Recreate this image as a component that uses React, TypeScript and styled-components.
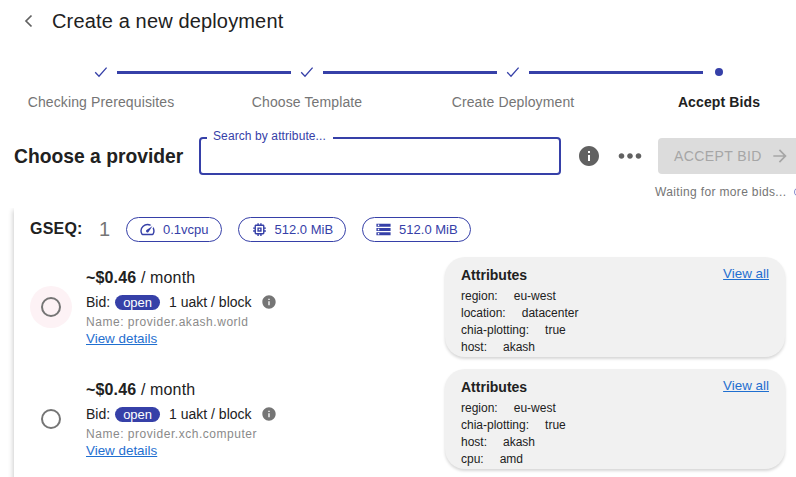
import React from "react";
import styled, { createGlobalStyle } from "styled-components";

const Global = createGlobalStyle`
  html, body { margin: 0; padding: 0; background: #fff; }
  body { font-family: "Liberation Sans", Arial, sans-serif; color: #212121; }
`;

const PRIMARY = "#3640a8";

const Page = styled.div`
  width: 796px;
  height: 477px;
  overflow: hidden;
  position: relative;
`;

const Header = styled.header`
  display: flex;
  align-items: center;
  height: 42px;
  padding-left: 24px;
`;

const BackButton = styled.span`
  display: flex;
  width: 28px;
  color: #616161;
`;

const Title = styled.h1`
  margin: 0;
  font-size: 20px;
  font-weight: 400;
  line-height: 42px;
  letter-spacing: 0.15px;
`;

const Stepper = styled.div`
  display: grid;
  grid-template-columns: repeat(4, 206px);
  margin: 20px 0 0 -2px;
`;

const Step = styled.div`
  display: flex;
  flex-direction: column;
  align-items: center;
  position: relative;
`;

const StepIconWrap = styled.div`
  height: 20px;
  display: flex;
  align-items: center;
  justify-content: center;
  color: ${PRIMARY};
`;

const Connector = styled.span`
  position: absolute;
  top: 9px;
  left: calc(50% + 16px);
  width: 174px;
  height: 3px;
  background: ${PRIMARY};
`;

const Dot = styled.span`
  width: 8px;
  height: 8px;
  border-radius: 50%;
  background: ${PRIMARY};
`;

const StepLabel = styled.div<{ $active?: boolean }>`
  margin-top: 10px;
  font-size: 14px;
  line-height: 20px;
  letter-spacing: 0.12px;
  white-space: nowrap;
  font-weight: ${(p) => (p.$active ? 700 : 400)};
  color: ${(p) => (p.$active ? "#212121" : "#757575")};
`;

const Toolbar = styled.div`
  display: flex;
  align-items: center;
  margin-top: 24px;
  padding-left: 14px;
  height: 40px;
`;

const Heading = styled.h2`
  margin: 0;
  padding-top: 2px;
  width: 185px;
  flex-shrink: 0;
  font-size: 19.3px;
  font-weight: 700;
  white-space: nowrap;
`;

const SearchBox = styled.div`
  position: relative;
  flex-shrink: 0;
  box-sizing: border-box;
  width: 362px;
  height: 38px;
  border: 2px solid ${PRIMARY};
  border-radius: 4px;
`;

const SearchLabel = styled.label`
  position: absolute;
  left: 6px;
  top: -10px;
  padding: 0 7px 0 6px;
  background: #fff;
  color: ${PRIMARY};
  font-size: 12px;
  line-height: 14px;
  letter-spacing: 0.1px;
  white-space: nowrap;
`;

const ToolIcon = styled.span`
  display: flex;
  flex-shrink: 0;
  color: #616161;
  margin-left: ${(p: { $ml: number }) => p.$ml}px;
`;

const AcceptButton = styled.button`
  flex-shrink: 0;
  display: flex;
  align-items: center;
  gap: 8px;
  box-sizing: border-box;
  width: 160px;
  height: 36px;
  margin-left: 11px;
  padding: 0 0 0 16px;
  border: 0;
  border-radius: 4px;
  background: #dcdcdc;
  color: #a6a6a6;
  font-family: inherit;
  font-size: 14px;
  letter-spacing: 0.4px;
  white-space: nowrap;
`;

const WaitingRow = styled.div`
  display: flex;
  align-items: center;
  gap: 8px;
  margin-top: 7px;
  padding-left: 655px;
  height: 18px;
  font-size: 12px;
  letter-spacing: 0.35px;
  color: #757575;
  white-space: nowrap;
`;

const Spinner = styled.span`
  flex-shrink: 0;
  width: 10px;
  height: 10px;
  box-sizing: border-box;
  border: 1.5px solid ${PRIMARY};
  border-radius: 50%;
  opacity: 0.6;
`;

const Panel = styled.section`
  margin: 7px 0 0 14px;
  width: 800px;
  height: 300px;
  background: #fff;
  box-shadow: -1px 2px 5px rgba(0, 0, 0, 0.2);
  clip-path: inset(0 0 0 -8px);
`;

const GroupHeader = styled.div`
  display: flex;
  align-items: center;
  height: 42px;
  padding: 0 0 0 16px;
`;

const GroupLabel = styled.span`
  width: 69px;
  font-size: 16px;
  font-weight: 700;
  letter-spacing: 0.2px;
`;

const GroupNumber = styled.span`
  width: 27px;
  font-size: 20px;
  color: #757575;
`;

const Chip = styled.span`
  display: inline-flex;
  align-items: center;
  gap: 7px;
  box-sizing: border-box;
  height: 25px;
  padding: 0 12px;
  margin-right: 16px;
  border: 1px solid ${PRIMARY};
  border-radius: 13px;
  color: ${PRIMARY};
  font-size: 13px;
  white-space: nowrap;
`;

const BidRow = styled.div`
  display: flex;
  height: 112px;
  padding-top: 7px;
  box-sizing: border-box;
`;

const RadioCell = styled.div`
  width: 72px;
  height: 100px;
  display: flex;
  align-items: center;
  justify-content: center;
  flex-shrink: 0;
`;

const Halo = styled.span<{ $focused?: boolean }>`
  width: 42px;
  height: 42px;
  margin-left: 2px;
  border-radius: 50%;
  background: ${(p) => (p.$focused ? "#fdf2f5" : "transparent")};
  display: flex;
  align-items: center;
  justify-content: center;
`;

const RadioRing = styled.span`
  box-sizing: border-box;
  width: 20px;
  height: 20px;
  border: 2px solid #757575;
  border-radius: 50%;
`;

const BidInfo = styled.div`
  width: 359px;
  flex-shrink: 0;
  padding-top: 11px;
`;

const Price = styled.div`
  font-size: 16px;
  line-height: 20px;
  letter-spacing: 0.15px;
  b {
    font-weight: 700;
  }
`;

const BidLine = styled.div`
  display: flex;
  align-items: center;
  height: 18px;
  margin-top: 5px;
  font-size: 14px;
`;

const Status = styled.span`
  display: inline-block;
  margin: 0 9px 0 5px;
  padding: 0 8px;
  height: 15px;
  line-height: 15px;
  border-radius: 8px;
  background: ${PRIMARY};
  color: #fff;
  font-size: 13px;
`;

const SmallInfo = styled.span`
  display: flex;
  margin-left: 9px;
  color: #757575;
`;

const ProviderName = styled.div`
  margin-top: 3px;
  font-size: 12px;
  line-height: 16px;
  letter-spacing: 0.53px;
  color: #8a8a8a;
`;

const Link = styled.a`
  color: #1f6fd0;
  text-decoration: underline;
  font-size: 13.4px;
`;

const DetailsLine = styled.div`
  line-height: 16px;
`;

const AttrCard = styled.div`
  position: relative;
  box-sizing: border-box;
  width: 340px;
  height: 100px;
  flex-shrink: 0;
  overflow: hidden;
  padding: 9px 16px 0;
  border-radius: 20px;
  background: #f1f1f1;
  box-shadow: 0 2px 3px rgba(0, 0, 0, 0.16);
`;

const AttrTitle = styled.div`
  font-size: 14px;
  font-weight: 700;
  line-height: 18px;
  margin-bottom: 4px;
`;

const ViewAll = styled.span`
  position: absolute;
  top: 8px;
  right: 16px;
  line-height: 16px;
`;

const AttrLine = styled.div`
  display: flex;
  gap: 16px;
  font-size: 12px;
  line-height: 17px;
  white-space: nowrap;
`;

const Icon = ({ d, size }: { d: string; size: number }) => (
  <svg width={size} height={size} viewBox="0 0 24 24" fill="currentColor" aria-hidden="true">
    <path d={d} />
  </svg>
);

const P = {
  info: "M12 2C6.48 2 2 6.48 2 12s4.48 10 10 10 10-4.48 10-10S17.52 2 12 2zm1 15h-2v-6h2v6zm0-8h-2V7h2v2z",
  more: "M6 10c-1.1 0-2 .9-2 2s.9 2 2 2 2-.9 2-2-.9-2-2-2zm12 0c-1.1 0-2 .9-2 2s.9 2 2 2 2-.9 2-2-.9-2-2-2zm-6 0c-1.1 0-2 .9-2 2s.9 2 2 2 2-.9 2-2-.9-2-2-2z",
  arrow: "M12 4l-1.41 1.41L16.17 11H4v2h12.17l-5.58 5.59L12 20l8-8z",
  speed: "M20.38 8.57l-1.23 1.85a8 8 0 0 1-.22 7.58H5.07A8 8 0 0 1 15.58 6.85l1.85-1.23A10 10 0 0 0 3.35 19a2 2 0 0 0 1.72 1h13.85a2 2 0 0 0 1.74-1 10 10 0 0 0-.27-10.44zm-9.79 6.84a2 2 0 0 0 2.83 0l5.66-8.49-8.49 5.66a2 2 0 0 0 0 2.83z",
  memory: "M15 9H9v6h6V9zm-2 4h-2v-2h2v2zm8-2V9h-2V7c0-1.1-.9-2-2-2h-2V3h-2v2h-2V3H9v2H7c-1.1 0-2 .9-2 2v2H3v2h2v2H3v2h2v2c0 1.1.9 2 2 2h2v2h2v-2h2v2h2v-2h2c1.1 0 2-.9 2-2v-2h2v-2h-2v-2h2zm-4 6H7V7h10v10z",
  storage: "M2 20h20v-4H2v4zm2-3h2v2H4v-2zM2 4v4h20V4H2zm4 3H4V5h2v2zm-4 7h20v-4H2v4zm2-3h2v2H4v-2z",
};

const Check = () => (
  <svg width="16" height="16" viewBox="0 0 16 16" fill="none" stroke="currentColor" strokeWidth="1.3" aria-hidden="true">
    <path d="M2.2 8.3 6 12.2 13.6 3.6" />
  </svg>
);

const Chevron = () => (
  <svg width="10" height="14" viewBox="0 0 10 14" fill="none" stroke="currentColor" strokeWidth="1.7" aria-hidden="true">
    <path d="M7.5 1.5 2 7l5.5 5.5" />
  </svg>
);

const steps = ["Checking Prerequisites", "Choose Template", "Create Deployment"];

const bids = [
  {
    name: "provider.akash.world",
    focused: true,
    attrs: [["region:", "eu-west"], ["location:", "datacenter"], ["chia-plotting:", "true"], ["host:", "akash"]],
  },
  {
    name: "provider.xch.computer",
    focused: false,
    attrs: [["region:", "eu-west"], ["chia-plotting:", "true"], ["host:", "akash"], ["cpu:", "amd"]],
  },
];

export default function App() {
  return (
    <Page>
      <Global />
      <Header>
        <BackButton><Chevron /></BackButton>
        <Title>Create a new deployment</Title>
      </Header>

      <Stepper>
        {steps.map((s) => (
          <Step key={s}>
            <StepIconWrap><Check /></StepIconWrap>
            <Connector />
            <StepLabel>{s}</StepLabel>
          </Step>
        ))}
        <Step>
          <StepIconWrap><Dot /></StepIconWrap>
          <StepLabel $active>Accept Bids</StepLabel>
        </Step>
      </Stepper>

      <Toolbar>
        <Heading>Choose a provider</Heading>
        <SearchBox><SearchLabel>Search by attribute...</SearchLabel></SearchBox>
        <ToolIcon $ml={16}><Icon d={P.info} size={24} /></ToolIcon>
        <ToolIcon $ml={12}><Icon d={P.more} size={34} /></ToolIcon>
        <AcceptButton disabled>
          ACCEPT BID
          <Icon d={P.arrow} size={20} />
        </AcceptButton>
      </Toolbar>

      <WaitingRow>
        Waiting for more bids...
        <Spinner />
      </WaitingRow>

      <Panel>
        <GroupHeader>
          <GroupLabel>GSEQ:</GroupLabel>
          <GroupNumber>1</GroupNumber>
          <Chip><Icon d={P.speed} size={17} />0.1vcpu</Chip>
          <Chip><Icon d={P.memory} size={17} />512.0 MiB</Chip>
          <Chip><Icon d={P.storage} size={17} />512.0 MiB</Chip>
        </GroupHeader>

        {bids.map((b) => (
          <BidRow key={b.name}>
            <RadioCell>
              <Halo $focused={b.focused}><RadioRing /></Halo>
            </RadioCell>
            <BidInfo>
              <Price><b>~$0.46</b> / month</Price>
              <BidLine>
                Bid:<Status>open</Status>1 uakt / block
                <SmallInfo><Icon d={P.info} size={16} /></SmallInfo>
              </BidLine>
              <ProviderName>Name: {b.name}</ProviderName>
              <DetailsLine><Link href="#">View details</Link></DetailsLine>
            </BidInfo>
            <AttrCard>
              <AttrTitle>Attributes</AttrTitle>
              <ViewAll><Link href="#">View all</Link></ViewAll>
              {b.attrs.map(([k, v]) => (
                <AttrLine key={k}><span>{k}</span><span>{v}</span></AttrLine>
              ))}
            </AttrCard>
          </BidRow>
        ))}
      </Panel>
    </Page>
  );
}
